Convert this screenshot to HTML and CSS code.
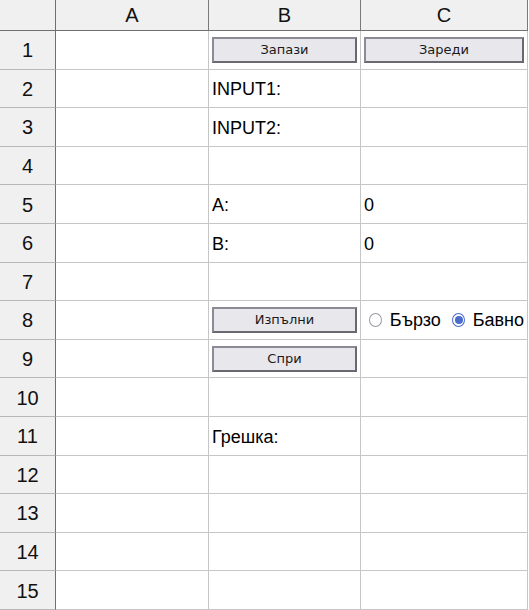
FILE: index.html
```html
<!DOCTYPE html>
<html>
<head>
<meta charset="utf-8">
<link rel="stylesheet" href="styles.css">
</head>
<body>
<div class="sheet">
  <div class="corner"></div>
  <div class="colhead">A</div>
  <div class="colhead">B</div>
  <div class="colhead">C</div>

  <div class="rowhead">1</div>
  <div class="cell"></div>
  <div class="cell btncell"><button class="btn">Запази</button></div>
  <div class="cell btncell"><button class="btn wide">Зареди</button></div>

  <div class="rowhead">2</div>
  <div class="cell"></div>
  <div class="cell">INPUT1:</div>
  <div class="cell"></div>

  <div class="rowhead">3</div>
  <div class="cell"></div>
  <div class="cell">INPUT2:</div>
  <div class="cell"></div>

  <div class="rowhead">4</div>
  <div class="cell"></div>
  <div class="cell"></div>
  <div class="cell"></div>

  <div class="rowhead">5</div>
  <div class="cell"></div>
  <div class="cell">A:</div>
  <div class="cell">0</div>

  <div class="rowhead">6</div>
  <div class="cell"></div>
  <div class="cell">B:</div>
  <div class="cell">0</div>

  <div class="rowhead">7</div>
  <div class="cell"></div>
  <div class="cell"></div>
  <div class="cell"></div>

  <div class="rowhead">8</div>
  <div class="cell"></div>
  <div class="cell btncell"><button class="btn">Изпълни</button></div>
  <div class="cell radios">
    <span class="radio"></span><span class="rlabel">Бързо</span>
    <span class="radio checked"></span><span class="rlabel">Бавно</span>
  </div>

  <div class="rowhead">9</div>
  <div class="cell"></div>
  <div class="cell btncell"><button class="btn">Спри</button></div>
  <div class="cell"></div>

  <div class="rowhead">10</div>
  <div class="cell"></div>
  <div class="cell"></div>
  <div class="cell"></div>

  <div class="rowhead">11</div>
  <div class="cell"></div>
  <div class="cell">Грешка:</div>
  <div class="cell"></div>

  <div class="rowhead">12</div>
  <div class="cell"></div>
  <div class="cell"></div>
  <div class="cell"></div>

  <div class="rowhead">13</div>
  <div class="cell"></div>
  <div class="cell"></div>
  <div class="cell"></div>

  <div class="rowhead">14</div>
  <div class="cell"></div>
  <div class="cell"></div>
  <div class="cell"></div>

  <div class="rowhead">15</div>
  <div class="cell"></div>
  <div class="cell"></div>
  <div class="cell"></div>
</div>
</body>
</html>
```

FILE: styles.css
```css
html, body {
  margin: 0;
  padding: 0;
  background: #ffffff;
}

.sheet {
  display: grid;
  grid-template-columns: 56px 153px 152px 167px;
  grid-template-rows: 31px repeat(15, 1fr);
  height: 610px;
  width: 528px;
  font-family: "Liberation Sans", Arial, sans-serif;
  color: #000;
}

.corner,
.colhead,
.rowhead {
  background: #f0f0f0;
  border-right: 1px solid #6f6f6f;
  border-bottom: 1px solid #6f6f6f;
  box-sizing: border-box;
  display: flex;
  align-items: center;
  justify-content: center;
  font-size: 20px;
  color: #111;
}

.colhead {
  border-right-color: #7a7a7a;
}

.rowhead {
  border-bottom-color: #b8b8b8;
  padding-top: 2px;
}

.cell {
  border-right: 1px solid #c6c6c6;
  border-bottom: 1px solid #c6c6c6;
  box-sizing: border-box;
  display: flex;
  align-items: center;
  padding: 3px 3px 0 3px;
  font-size: 18px;
  white-space: nowrap;
  overflow: hidden;
}

.btncell {
  padding: 0 3px 0 3px;
}

.btn {
  width: 145px;
  height: 26px;
  box-sizing: border-box;
  background: #e8e7ec;
  border: 2px solid;
  border-color: #8c8a94 #6a6870 #6a6870 #8c8a94;
  font-family: "DejaVu Sans", Verdana, sans-serif;
  font-size: 13px;
  color: #1a1a1a;
  padding: 0;
  margin: 0;
}

.btn.wide {
  width: 162px;
}

.radios {
  padding-left: 8px;
  padding-top: 1px;
}

.radio {
  width: 14px;
  height: 14px;
  box-sizing: border-box;
  border: 1px solid #9a9aa2;
  border-radius: 50%;
  background: #fff;
  margin-right: 8px;
  position: relative;
}

.radio.checked {
  border-color: #4a6ccc;
  margin-left: 11px;
}

.radio.checked::after {
  content: "";
  position: absolute;
  left: 2px;
  top: 2px;
  width: 8px;
  height: 8px;
  border-radius: 50%;
  background: #4a6ccc;
}

.rlabel {
  font-size: 18px;
}
```
